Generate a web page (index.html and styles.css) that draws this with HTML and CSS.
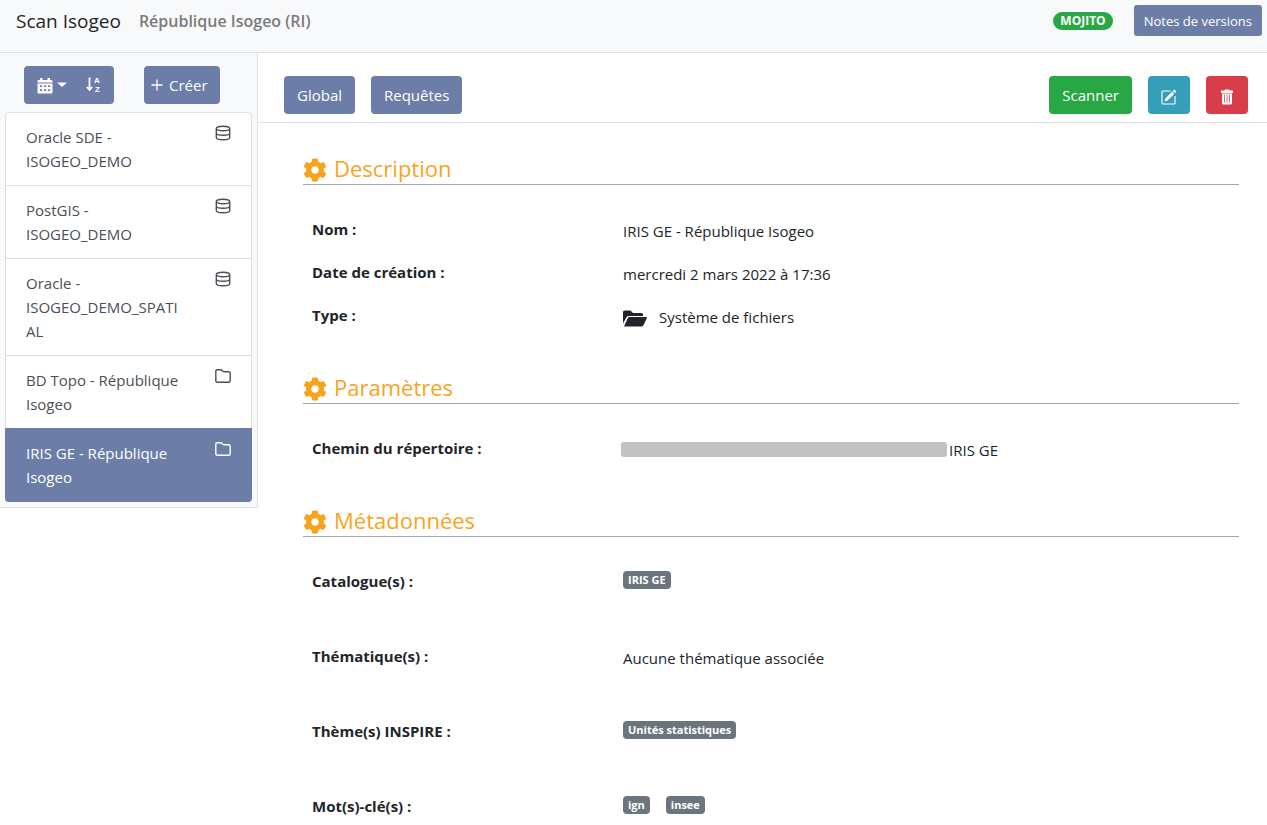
FILE: index.html
```html
<!DOCTYPE html>
<html lang="fr">
<head>
<meta charset="utf-8">
<meta name="viewport" content="width=device-width, initial-scale=1">
<title>Scan Isogeo</title>
<link rel="stylesheet" href="styles.css">
</head>
<body>
<svg class="sprite" aria-hidden="true">
  <symbol id="database" viewBox="0 0 16 16"><path d="M1.300 3.500C1.300 2.200 4.300 1.200 8 1.200s6.700 1 6.700 2.300S11.700 5.800 8 5.800 1.300 4.800 1.300 3.500v9c0 1.300 3 2.300 6.700 2.300s6.700-1 6.700-2.300v-9M1.300 8c0 1.300 3 2.300 6.700 2.300s6.700-1 6.700-2.300" fill="none" stroke="currentColor" stroke-width="1.400"/></symbol>
  <symbol id="folder" viewBox="0 0 16 16"><path d="M.8 12.800V3.200C.8 2.200 1.400 1.700 2.300 1.700h3.200c.8 0 1.200.3 1.600.8l.6.700c.3.400.7.500 1.200.500h4.800c1 0 1.500.6 1.500 1.500v7.600c0 1-.6 1.500-1.500 1.500H2.300c-1 0-1.500-.6-1.500-1.500z" fill="none" stroke="currentColor" stroke-width="1.400"/></symbol>
  <symbol id="gear" viewBox="0 0 512 512"><path fill="currentColor" d="M487.400 315.700l-42.600-24.600c4.300-23.200 4.300-47 0-70.200l42.600-24.600c4.900-2.800 7.100-8.600 5.500-14-11.100-35.600-30-67.800-54.700-94.600-3.800-4.100-10-5.100-14.800-2.300L380.800 110c-17.900-15.400-38.500-27.300-60.800-35.100V25.800c0-5.600-3.900-10.500-9.400-11.700-36.700-8.200-74.300-7.800-109.200 0-5.500 1.200-9.400 6.100-9.400 11.700V75c-22.200 7.900-42.800 19.800-60.800 35.100L88.700 85.500c-4.900-2.800-11-1.900-14.800 2.300-24.700 26.700-43.600 58.900-54.700 94.600-1.700 5.400.6 11.200 5.500 14L67.300 221c-4.300 23.200-4.300 47 0 70.200l-42.600 24.600c-4.900 2.800-7.100 8.600-5.500 14 11.100 35.600 30 67.800 54.700 94.600 3.800 4.100 10 5.100 14.800 2.300l42.600-24.600c17.900 15.400 38.500 27.300 60.800 35.100v49.200c0 5.600 3.900 10.500 9.400 11.700 36.700 8.200 74.300 7.800 109.200 0 5.500-1.200 9.400-6.100 9.400-11.700v-49.200c22.200-7.900 42.800-19.800 60.800-35.100l42.600 24.600c4.900 2.800 11 1.900 14.800-2.300 24.700-26.700 43.600-58.900 54.700-94.600 1.500-5.500-.7-11.300-5.600-14.100zM256 336c-44.100 0-80-35.900-80-80s35.900-80 80-80 80 35.900 80 80-35.900 80-80 80z"/></symbol>
</svg>

<header class="topbar">
  <a class="brand" href="#">Scan Isogeo</a>
  <span class="workgroup">République Isogeo (RI)</span>
  <span class="pill">MOJITO</span>
  <button class="btn btn-small" type="button">Notes de versions</button>
</header>

<div class="layout">
  <aside class="sidebar">
    <div class="sidebar-tools">
      <div class="btn-group">
        <button class="btn btn-icon" type="button" aria-label="Trier par date">
          <svg width="16" height="17" viewBox="0 0 16 17"><path fill="currentColor" fill-rule="evenodd" d="M3 1h2.500v2h5V1H13v2h1.500Q15.500 3 15.500 4v1.500H.5V4Q.5 3 1.500 3H3zM.5 6.500h15v9q0 1-1 1h-13q-1 0-1-1zM3 8.200v1.900h2.200V8.200zm4 0v1.900h2.200V8.200zm4 0v1.900h2.200V8.200zM3 12.200v1.900h2.200v-1.900zm4 0v1.900h2.200v-1.900zm4 0v1.900h2.200v-1.900z"/></svg>
          <svg width="10" height="17" viewBox="0 0 10 17"><path fill="currentColor" d="M0 5.500h10L5 10z"/></svg>
        </button>
        <button class="btn btn-icon" type="button" aria-label="Trier par nom">
          <svg class="sort" width="16" height="20" viewBox="0 0 16 20"><path d="M3.500 2.500v12M.8 12l2.700 3 2.700-3" fill="none" stroke="currentColor" stroke-width="1.800"/><text x="8" y="8">A</text><text x="9" y="17">Z</text></svg>
        </button>
      </div>
      <button class="btn btn-create" type="button">
        <svg width="12" height="12" viewBox="0 0 12 12"><path d="M6 .5v11M.5 6h11" stroke="currentColor" stroke-width="1.300"/></svg>
        Créer
      </button>
    </div>
    <nav class="entries">
      <a class="entry" href="#"><span>Oracle SDE - ISOGEO_DEMO</span><svg class="entry-icon"><use href="#database"/></svg></a>
      <a class="entry" href="#"><span>PostGIS - ISOGEO_DEMO</span><svg class="entry-icon"><use href="#database"/></svg></a>
      <a class="entry" href="#"><span>Oracle - ISOGEO_DEMO_SPATIAL</span><svg class="entry-icon"><use href="#database"/></svg></a>
      <a class="entry" href="#"><span>BD Topo - République Isogeo</span><svg class="entry-icon"><use href="#folder"/></svg></a>
      <a class="entry active" href="#" aria-current="page"><span>IRIS GE - République Isogeo</span><svg class="entry-icon"><use href="#folder"/></svg></a>
    </nav>
  </aside>

  <main class="main">
    <div class="toolbar">
      <button class="btn" type="button">Global</button>
      <button class="btn" type="button">Requêtes</button>
      <span class="spacer"></span>
      <button class="btn btn-success" type="button">Scanner</button>
      <button class="btn btn-info" type="button" aria-label="Modifier">
        <svg width="16" height="16" viewBox="0 0 16 16"><path d="M9.500 2H2Q1 2 1 3v11q0 1 1 1h11q1 0 1-1V7" fill="none" stroke="currentColor" stroke-width="1.100"/><path fill="currentColor" d="M12.800.8q.4-.4.800 0l1.400 1.400q.4.400 0 .8l-1.200 1.200-2.200-2.200zM10.900 2.700l2.200 2.200-6.600 6.600-3 1 1-3.200z"/></svg>
      </button>
      <button class="btn btn-danger" type="button" aria-label="Supprimer">
        <svg width="16" height="16" viewBox="0 0 16 16"><path fill="currentColor" d="M5.500 1.500Q5.500.6 6.400.6h3.200q.9 0 .9.900H14v2.600H2V1.500zM3 4.500h10V14q0 1.500-1.500 1.500h-7Q3 15.500 3 14z"/><path d="M5.500 5.500v8M8 5.500v8M10.500 5.500v8" stroke="#d83d49" stroke-width=".8"/></svg>
      </button>
    </div>

    <div class="content">
      <section class="section">
        <h2 class="title"><svg class="gear"><use href="#gear"/></svg>Description</h2>
        <dl class="fields">
          <div class="field"><dt>Nom :</dt><dd>IRIS GE - République Isogeo</dd></div>
          <div class="field"><dt>Date de création :</dt><dd>mercredi 2 mars 2022 à 17:36</dd></div>
          <div class="field"><dt>Type :</dt><dd class="kind">
            <svg width="24" height="24" viewBox="0 0 24 24"><path fill="currentColor" d="M0 18.500V7q0-1.500 1.500-1.500h6L10 8h8.500Q20 8 20 9.500V11H6q-1.800 0-2.500 1.300zM1 21.500l3.700-8.300q.6-1.200 1.800-1.200H23q1.300 0 .8 1.200l-3.200 6.900q-.6 1.400-2 1.400H1z"/></svg>
            Système de fichiers</dd></div>
        </dl>
      </section>

      <section class="section">
        <h2 class="title"><svg class="gear"><use href="#gear"/></svg>Paramètres</h2>
        <dl class="fields">
          <div class="field"><dt>Chemin du répertoire :</dt><dd class="path"><span class="mask"></span>IRIS GE</dd></div>
        </dl>
      </section>

      <section class="section">
        <h2 class="title"><svg class="gear"><use href="#gear"/></svg>Métadonnées</h2>
        <dl class="fields tall">
          <div class="field"><dt>Catalogue(s) :</dt><dd class="tags"><span class="tag">IRIS GE</span></dd></div>
          <div class="field"><dt>Thématique(s) :</dt><dd>Aucune thématique associée</dd></div>
          <div class="field"><dt>Thème(s) INSPIRE :</dt><dd class="tags"><span class="tag">Unités statistiques</span></dd></div>
          <div class="field"><dt>Mot(s)-clé(s) :</dt><dd class="tags"><span class="tag">ign</span><span class="tag">insee</span></dd></div>
        </dl>
      </section>
    </div>
  </main>
</div>
</body>
</html>
```
FILE: styles.css
```css
* { box-sizing: border-box; }
html { scrollbar-width: none; }
body {
  margin: 0;
  background: #fff;
  color: #212529;
  font: 15px/24px "Segoe UI", "Open Sans", "Noto Sans", sans-serif;
}
a { color: inherit; text-decoration: none; }
svg { flex: none; display: block; }
.sprite { position: absolute; width: 0; height: 0; }

.topbar {
  display: flex;
  align-items: flex-start;
  padding: 5px 5px 15px 16px;
  background: #f8f9fa;
  border-bottom: 1px solid #dee2e6;
}
.brand { font-size: 19px; line-height: 32px; margin-right: 18px; }
.workgroup { flex: 1; font-size: 16px; line-height: 32px; font-weight: 600; color: #7b7b7b; }
.pill {
  margin: 7px 21px 0 0;
  padding: 0 7px;
  border-radius: 9px;
  background: #28a745;
  color: #fff;
  font-size: 12px;
  font-weight: 700;
  line-height: 18px;
}

.btn {
  display: flex;
  align-items: center;
  justify-content: center;
  min-height: 38px;
  padding: 0 13px;
  border: 0;
  border-radius: 4px;
  background: #6c7da7;
  color: #fff;
  font: inherit;
  cursor: pointer;
}
.btn-small { min-height: 31px; padding: 0 10px; border-radius: 3px; font-size: 13px; }
.btn-success { background: #28a745; }
.btn-info { background: #359fb8; }
.btn-danger { background: #d83d49; }
.btn-info svg, .btn-danger svg { margin-top: 4px; }

.layout { display: flex; align-items: flex-start; }
.sidebar {
  flex: none;
  width: 258px;
  padding: 13px 5px 5px;
  background: #f8f9fa;
  border-right: 1px solid #dee2e6;
  border-bottom: 1px solid #dee2e6;
}
.sidebar-tools { display: flex; gap: 30px; padding: 0 19px 8px; }
.btn-group { display: flex; }
.btn-group .btn { gap: 4px; padding: 0 13px; }
.btn-group .btn:first-child { padding-right: 6px; border-radius: 4px 0 0 4px; }
.btn-group .btn:last-child { border-radius: 0 4px 4px 0; padding-right: 12px; }
.sort text { fill: currentColor; font: bold 8px "Liberation Sans", Arial, sans-serif; }
.btn-create { gap: 6px; padding: 0 12px 0 7px; }

.entries { border: 1px solid #dcdee0; border-radius: 4px; background: #fff; }
.entry {
  display: flex;
  justify-content: space-between;
  gap: 32px;
  padding: 12px 20px;
  color: #495057;
}
.entry + .entry { border-top: 1px solid #dcdee0; }
.entry span { flex: 1; min-width: 0; overflow-wrap: anywhere; }
.entry-icon { width: 16px; height: 16px; }
.entry.active {
  margin: 0 -1px -1px;
  padding: 12px 21px 13px;
  border-color: #6c7da7;
  border-radius: 0 0 4px 4px;
  background: #6c7da7;
  color: #fff;
}

.main { flex: 1; min-width: 0; }
.toolbar {
  display: flex;
  gap: 16px;
  padding: 23px 19px 8px 26px;
  border-bottom: 1px solid #dee2e6;
}
.spacer { flex: 1; }
.content { padding: 29px 28px 0 45px; }
.section { margin-bottom: 34px; }
.title {
  display: flex;
  gap: 7px;
  margin: 0 0 23px;
  border-bottom: 1px solid #a6a6a6;
  color: #f7a41d;
  font-size: 22px;
  font-weight: 400;
  line-height: 32px;
}
.gear { width: 24px; height: 24px; margin-top: 6px; }
.fields { margin: 0; }
.field {
  display: grid;
  grid-template-columns: 1fr 2fr;
  min-height: 43px;
  padding-top: 9px;
}
.tall .field { min-height: 75px; }
.tall .field:last-child { min-height: 0; }
.section:last-child { margin-bottom: 0; }
dt { padding-left: 9px; font-weight: 700; }
dd { margin: 0; padding: 2px 0 0 8px; }
.kind { display: flex; gap: 12px; }
.path { display: flex; align-items: flex-start; gap: 2px; padding-left: 6px; }
.mask { width: 326px; height: 15px; margin-top: 4px; border-radius: 3px; background: #c2c2c2; }
.tags { display: flex; align-items: flex-start; gap: 16px; }
.tag {
  padding: 0 5px;
  border-radius: 4px;
  background: #6c757d;
  color: #fff;
  font-size: 11px;
  font-weight: 700;
  line-height: 18px;
}
```
